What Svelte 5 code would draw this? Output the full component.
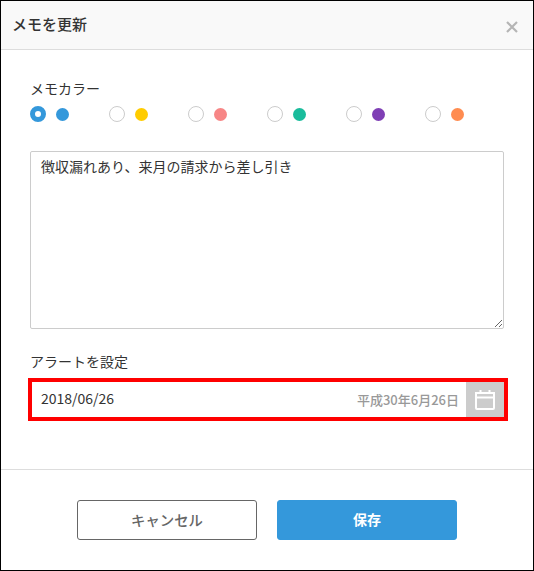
<script>
  const colors = ['#3498db', '#ffcc00', '#f78686', '#1abc9c', '#7f3fb5', '#ff8c50'];
</script>

<div class="modal">
  <header class="head">
    <h1>メモを更新</h1>
    <svg class="close" width="12" height="12" viewBox="0 0 12 12"><path d="M1 1L11 11M11 1L1 11" /></svg>
  </header>
  <div class="body">
    <div class="label first">メモカラー</div>
    <div class="colors">
      {#each colors as c, i}
        <div class="opt">
          <span class="radio" class:on={i === 0}></span>
          <span class="dot" style="background:{c}"></span>
        </div>
      {/each}
    </div>
    <textarea class="memo" value="徴収漏れあり、来月の請求から差し引き"></textarea>
    <div class="label second">アラートを設定</div>
    <div class="date">
      <span class="val">2018/06/26</span>
      <span class="era">平成30年6月26日</span>
      <span class="cal">
        <svg width="20" height="20" viewBox="0 0 20 20" fill="none">
          <path d="M1 3H19V18a1 1 0 0 1-1 1H2a1 1 0 0 1-1-1Z" stroke="#fff" stroke-width="2"/>
          <path d="M1 7.500H19" stroke="#fff" stroke-width="2"/>
          <path d="M5.500 0V3M14.500 0V3" stroke="#fff" stroke-width="2"/>
        </svg>
      </span>
    </div>
  </div>
  <footer class="foot">
    <button class="btn cancel">キャンセル</button>
    <button class="btn save">保存</button>
  </footer>
</div>

<style>
  :global(body) { margin: 0; background: #fff; }
  .modal {
    box-sizing: border-box;
    width: 534px;
    height: 571px;
    border: 1px solid #000;
    font-family: "Noto Sans CJK JP", "Noto Sans", sans-serif;
    color: #333;
    font-size: 14px;
    display: flex;
    flex-direction: column;
  }
  .head {
    height: 49px;
    box-sizing: border-box;
    background: #f9f9f9;
    border-bottom: 1px solid #ddd;
    display: flex;
    align-items: center;
    justify-content: space-between;
    padding: 0 15px 0 11px;
    flex: none;
  }
  h1 { margin: -2px 0 0; font-size: 15px; font-weight: 500; line-height: 20px; }
  .close { margin-top: 4px; }
  .close path { stroke: #b5b5b5; stroke-width: 2.200; fill: none; }
  .body { padding: 0 29px; flex: 1; display: flex; flex-direction: column; }
  .label { line-height: 20px; font-size: 14px; }
  .first { margin-top: 28px; }
  .colors { display: flex; margin-top: 8px; height: 16px; }
  .opt { width: 79px; display: flex; align-items: center; flex: none; }
  .radio {
    box-sizing: border-box;
    width: 16px;
    height: 16px;
    border-radius: 50%;
    border: 1px solid #ccc;
    background: #fff;
  }
  .radio.on { border: 5px solid #3498db; }
  .dot { width: 13px; height: 13px; border-radius: 50%; margin-left: 10px; }
  .memo {
    box-sizing: border-box;
    display: block;
    width: 474px;
    height: 178px;
    margin: 29px 0 0;
    padding: 4px 10px;
    border: 1px solid #ccc;
    border-radius: 2px;
    font: inherit;
    font-size: 14px;
    line-height: 20px;
    color: #333;
    outline: none;
  }
  .second { margin-top: 22px; }
  .date {
    box-sizing: border-box;
    width: 480px;
    height: 43px;
    margin: 7px 0 0 -2px;
    border: 4px solid #f00;
    display: flex;
    align-items: center;
    padding-left: 9px;
  }
  .val { flex: 1; font-size: 14px; margin-top: -4px; }
  .era { font-size: 13px; font-weight: 500; color: #999; margin-right: 7px; }
  .cal {
    width: 38px;
    height: 35px;
    background: #ccc;
    display: flex;
    align-items: center;
    justify-content: center;
  }
  .foot {
    flex: none;
    height: 101px;
    box-sizing: border-box;
    border-top: 1px solid #ddd;
    display: flex;
    justify-content: center;
    gap: 20px;
    padding-top: 30px;
  }
  .btn {
    box-sizing: border-box;
    width: 180px;
    height: 40px;
    border-radius: 3px;
    font: inherit;
    font-size: 14px;
    font-weight: 500;
    padding: 0 0 2px;
  }
  .cancel { background: #fff; border: 1px solid #666; color: #666; font-size: 14.400px; }
  .save { background: #3498db; border: 1px solid #3498db; color: #fff; font-weight: 700; }
</style>
